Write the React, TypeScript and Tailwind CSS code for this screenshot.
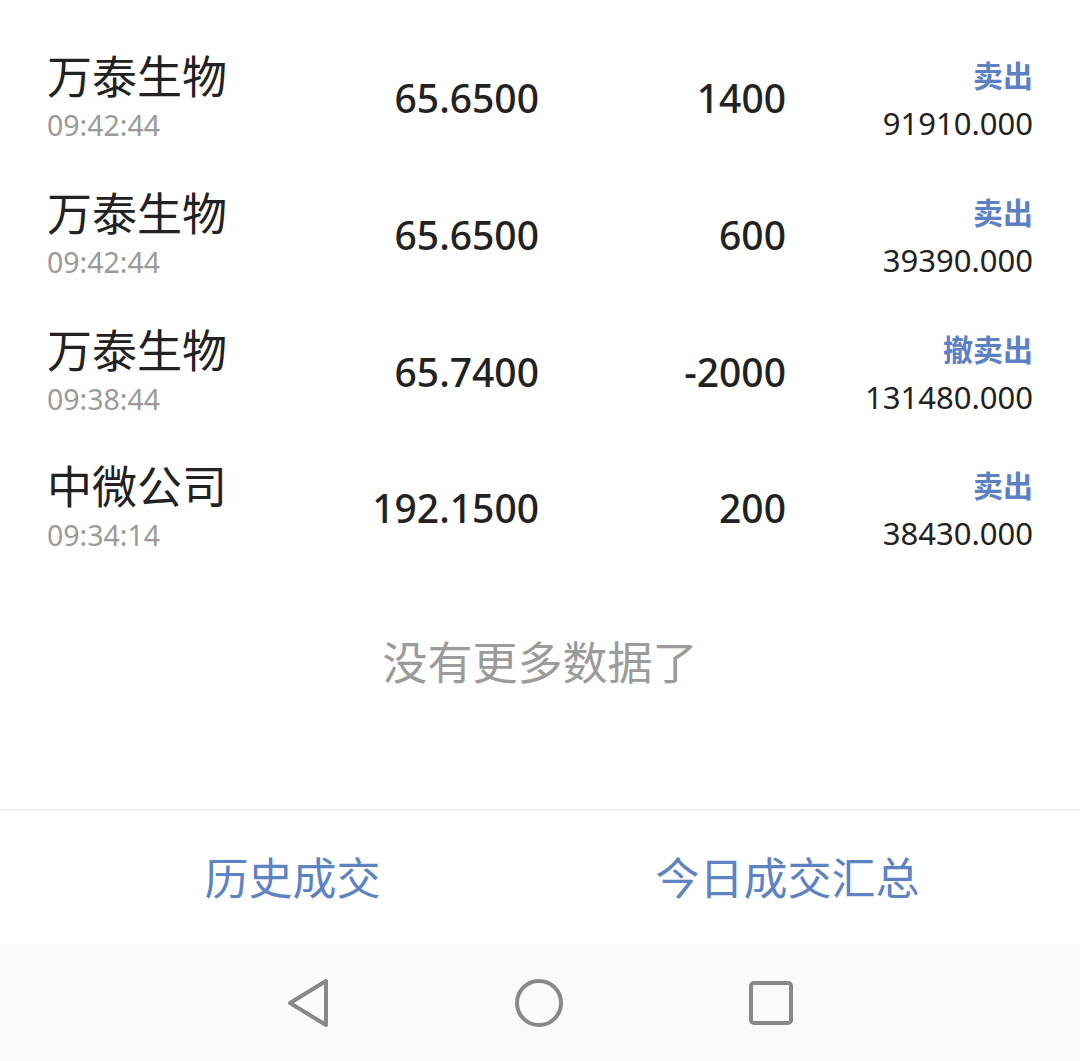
import React from 'react';

interface Trade {
  name: string;
  time: string;
  price: string;
  qty: string;
  action: string;
  amount: string;
}

const trades: Trade[] = [
  { name: '万泰生物', time: '09:42:44', price: '65.6500', qty: '1400', action: '卖出', amount: '91910.000' },
  { name: '万泰生物', time: '09:42:44', price: '65.6500', qty: '600', action: '卖出', amount: '39390.000' },
  { name: '万泰生物', time: '09:38:44', price: '65.7400', qty: '-2000', action: '撤卖出', amount: '131480.000' },
  { name: '中微公司', time: '09:34:14', price: '192.1500', qty: '200', action: '卖出', amount: '38430.000' },
];

const font = { fontFamily: '"Noto Sans", "Noto Sans CJK SC", sans-serif' };

const TradeRow: React.FC<{ trade: Trade }> = ({ trade }) => (
  <div className="grid grid-cols-[300px_192px_247px_247px] items-center h-[136.67px]">
    {/* Name + time */}
    <div className="flex flex-col">
      <span className="text-[45px] leading-[50px] text-[#222222]">{trade.name}</span>
      <span className="mt-[4px] text-[28.5px] leading-[38px] text-[#9a9a9a]">{trade.time}</span>
    </div>
    {/* Price */}
    <div className="text-right text-[39px] leading-[50px] font-medium text-[#222222]">{trade.price}</div>
    {/* Quantity */}
    <div className="text-right text-[39px] leading-[50px] font-medium text-[#222222]">{trade.qty}</div>
    {/* Action + amount */}
    <div className="flex flex-col items-end">
      <span className="text-[30px] leading-[46px] font-bold text-[#5c80c4]">{trade.action}</span>
      <span className="mt-[4px] text-[31px] leading-[40px] text-[#222222]">{trade.amount}</span>
    </div>
  </div>
);

export default function App() {
  return (
    <div className="w-full h-[1061px] flex flex-col bg-white" style={font}>
      {/* Trade list */}
      <div className="pt-[30px] px-[47px]">
        {trades.map((t, i) => (
          <TradeRow key={i} trade={t} />
        ))}
      </div>

      {/* End of list */}
      <div className="flex-1 flex justify-center pt-[56px]">
        <span className="text-[45px] leading-[60px] text-[#9b9b9b]">没有更多数据了</span>
      </div>

      {/* Tabs */}
      <div className="h-[135px] border-t-2 border-[#f0f0f0] flex items-center px-[45px]">
        <div className="flex-1 text-center text-[44px] leading-[60px] text-[#5d83c3]">历史成交</div>
        <div className="flex-1 text-center text-[44px] leading-[60px] text-[#5d83c3]">今日成交汇总</div>
      </div>

      {/* System nav bar */}
      <div className="h-[117px] bg-[#fafafa] flex items-center justify-center gap-[186px]">
        <svg width="42" height="52" viewBox="0 0 42 52" fill="none">
          <polygon points="3,26 39,4 39,48" stroke="#888888" strokeWidth="4" strokeLinejoin="round" />
        </svg>
        <svg width="48" height="48" viewBox="0 0 48 48" fill="none">
          <circle cx="24" cy="24" r="22" stroke="#888888" strokeWidth="4" />
        </svg>
        <svg width="44" height="44" viewBox="0 0 44 44" fill="none">
          <rect x="2" y="2" width="40" height="40" rx="3" stroke="#888888" strokeWidth="4" />
        </svg>
      </div>
    </div>
  );
}
